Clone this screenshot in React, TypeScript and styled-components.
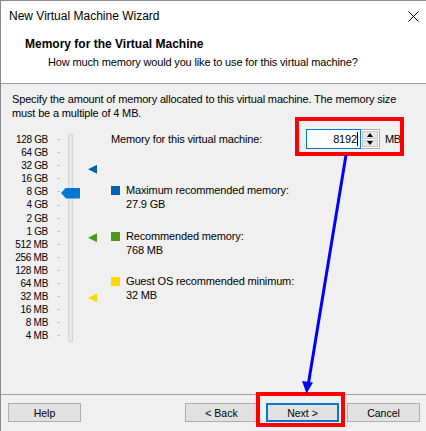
import React from 'react';
import styled, { createGlobalStyle } from 'styled-components';

const Global = createGlobalStyle`
  html, body { margin: 0; padding: 0; background: #f0f0f0; }
  body {
    font-family: "Liberation Sans", Arial, sans-serif;
    font-size: 12px;
    color: #000;
  }
  * { box-sizing: border-box; }
`;

const FONT = `"Liberation Sans", Arial, sans-serif`;

const Window = styled.div`
  position: relative;
  width: 426px;
  height: 431px;
  border-left: 1px solid #8a8a8a;
  border-top: 1px solid #8a8a8a;
  background: #f0f0f0;
  display: flex;
  flex-direction: column;
  overflow: hidden;
  font-family: ${FONT};
  font-size: 11px;
  letter-spacing: -0.15px;
`;

const TitleBar = styled.div`
  height: 30px;
  background: #fff;
  display: flex;
  align-items: center;
  justify-content: space-between;
  padding: 0 7px 0 8px;
  font-size: 12px;
  letter-spacing: 0;
`;

const Header = styled.div`
  height: 53px;
  background: #fff;
  border-bottom: 1px solid #a0a0a0;
  padding: 5px 0 0 24px;
  display: flex;
  flex-direction: column;
`;

const HeaderTitle = styled.div`
  font-weight: bold;
  font-size: 12px;
  letter-spacing: 0;
  line-height: 17px;
`;

const HeaderSub = styled.div`
  line-height: 17px;
  padding-left: 23px;
  margin-top: 1px;
`;

const Body = styled.div`
  flex: 1;
  display: flex;
  flex-direction: column;
  padding: 8px 0 0 11px;
`;

const Description = styled.div`
  line-height: 14px;
  width: 400px;
`;

const Content = styled.div`
  display: flex;
  margin-top: 9px;
`;

const SliderArea = styled.div`
  display: flex;
  align-items: flex-start;
`;

const STEP = 13.1;

const Labels = styled.div`
  width: 36px;
  padding-top: 4px;
  display: flex;
  flex-direction: column;
  align-items: flex-end;
  font-size: 10px;
  letter-spacing: -0.3px;
`;

const ScaleLabel = styled.div`
  height: ${STEP}px;
  line-height: ${STEP}px;
  white-space: nowrap;
`;

const Ticks = styled.div`
  width: 3px;
  margin-left: 9px;
  padding-top: 4px;
  display: flex;
  flex-direction: column;
`;

const Tick = styled.div`
  height: ${STEP}px;
  display: flex;
  align-items: center;
  &::before {
    content: '';
    display: block;
    width: 3px;
    height: 1px;
    background: #c4c4c4;
  }
`;

const Track = styled.div`
  position: relative;
  width: 5px;
  height: 208px;
  margin-left: 8px;
  margin-top: 5px;
  border: 1px solid #d6d6d6;
  background: #e7e7e7;
`;

const Thumb = styled.div`
  position: absolute;
  left: -8px;
  width: 19px;
  height: 11px;
  background: #0078d7;
  clip-path: polygon(0 50%, 5px 0, 100% 0, 100% 100%, 5px 100%);
`;

const Marker = styled.div<{ $color: string }>`
  position: absolute;
  left: 19px;
  width: 9px;
  height: 9px;
  background: ${(p) => p.$color};
  clip-path: polygon(0 50%, 100% 0, 100% 100%);
`;

const RightPane = styled.div`
  margin-left: 38px;
  display: flex;
  flex-direction: column;
`;

const MemRow = styled.div`
  display: flex;
  align-items: center;
  height: 20px;
`;

const MemLabel = styled.div`
  width: 195px;
`;

const Input = styled.div`
  width: 55px;
  height: 20px;
  background: #fff;
  border: 1px solid #0078d7;
  display: flex;
  align-items: center;
  justify-content: flex-end;
  padding-right: 2px;
`;

const Caret = styled.span`
  display: inline-block;
  width: 1px;
  height: 14px;
  background: #000;
`;

const Spinner = styled.div`
  width: 19px;
  height: 20px;
  border: 1px solid #adadad;
  border-left: none;
  background: #fff;
  display: flex;
  flex-direction: column;
  gap: 1px;
  padding: 1px;
`;

const SpinBtn = styled.div`
  flex: 1;
  background: #e5e5e5;
  border: 1px solid #c8c8c8;
  display: flex;
  align-items: center;
  justify-content: center;
`;

const Arrow = styled.div<{ $up?: boolean }>`
  width: 0;
  height: 0;
  border-left: 3.5px solid transparent;
  border-right: 3.5px solid transparent;
  ${(p) => (p.$up ? 'border-bottom: 4px solid #000;' : 'border-top: 4px solid #000;')}
`;

const Unit = styled.div`
  margin-left: 5px;
  letter-spacing: -0.5px;
`;

const Legend = styled.div`
  margin-top: 34px;
  display: flex;
  flex-direction: column;
  gap: 17.5px;
`;

const LegendItem = styled.div`
  display: flex;
  align-items: flex-start;
`;

const Swatch = styled.div<{ $color: string }>`
  width: 9px;
  height: 9px;
  margin-top: 3px;
  margin-right: 6px;
  background: ${(p) => p.$color};
`;

const LegendText = styled.div`
  line-height: 14px;
`;

const Footer = styled.div`
  height: 37px;
  border-top: 1px solid #a0a0a0;
  display: flex;
  align-items: flex-start;
  padding: 8px 6px 0 7px;
  gap: 8px;
`;

const Button = styled.div<{ $default?: boolean }>`
  width: 73px;
  height: 19px;
  background: #e1e1e1;
  border: ${(p) => (p.$default ? '2px solid #0078d7' : '1px solid #adadad')};
  display: flex;
  align-items: center;
  justify-content: center;
  font-size: 10.5px;
  letter-spacing: 0;
`;

const Spacer = styled.div`
  flex: 1;
`;

const Overlay = styled.svg`
  position: absolute;
  left: -1px;
  top: -1px;
  pointer-events: none;
`;

const labels = [
  '128 GB', '64 GB', '32 GB', '16 GB', '8 GB', '4 GB', '2 GB', '1 GB',
  '512 MB', '256 MB', '128 MB', '64 MB', '32 MB', '16 MB', '8 MB', '4 MB',
];

// position of a memory size (MB) on the log scale, relative to track top
const FIRST = 5.7;
const pos = (mb: number) => FIRST + STEP * (17 - Math.log2(mb));

const markers = [
  { mb: 28970, color: '#0063b1' },
  { mb: 768, color: '#4f961a' },
  { mb: 32, color: '#ffd800' },
];

const legend = [
  { color: '#0063b1', title: 'Maximum recommended memory:', value: '27.9 GB' },
  { color: '#4f961a', title: 'Recommended memory:', value: '768 MB' },
  { color: '#ffd800', title: 'Guest OS recommended minimum:', value: '32 MB' },
];

export default function App() {
  return (
    <>
      <Global />
      <Window>
        <TitleBar>
          <span>New Virtual Machine Wizard</span>
          <svg width="11" height="11" viewBox="0 0 11 11">
            <path d="M0.5 0.5 L10.5 10.5 M10.5 0.5 L0.5 10.5" stroke="#000" strokeWidth="1" />
          </svg>
        </TitleBar>
        <Header>
          <HeaderTitle>Memory for the Virtual Machine</HeaderTitle>
          <HeaderSub>How much memory would you like to use for this virtual machine?</HeaderSub>
        </Header>
        <Body>
          <Description>
            Specify the amount of memory allocated to this virtual machine. The memory size
            must be a multiple of 4 MB.
          </Description>
          <Content>
            <SliderArea>
              <Labels>
                {labels.map((l) => (
                  <ScaleLabel key={l}>{l}</ScaleLabel>
                ))}
              </Labels>
              <Ticks>
                {labels.map((l) => (
                  <Tick key={l} />
                ))}
              </Ticks>
              <Track>
                <Thumb style={{ top: pos(8192) - 5.5 }} />
                {markers.map((m) => (
                  <Marker key={m.mb} $color={m.color} style={{ top: pos(m.mb) - 4.5 }} />
                ))}
              </Track>
            </SliderArea>
            <RightPane>
              <MemRow>
                <MemLabel>Memory for this virtual machine:</MemLabel>
                <Input>
                  8192
                  <Caret />
                </Input>
                <Spinner>
                  <SpinBtn>
                    <Arrow $up />
                  </SpinBtn>
                  <SpinBtn>
                    <Arrow />
                  </SpinBtn>
                </Spinner>
                <Unit>MB</Unit>
              </MemRow>
              <Legend>
                {legend.map((it) => (
                  <LegendItem key={it.title}>
                    <Swatch $color={it.color} />
                    <LegendText>
                      {it.title}
                      <br />
                      {it.value}
                    </LegendText>
                  </LegendItem>
                ))}
              </Legend>
            </RightPane>
          </Content>
        </Body>
        <Footer>
          <Button>Help</Button>
          <Spacer />
          <Button>&lt; Back</Button>
          <Button $default>Next &gt;</Button>
          <Button>Cancel</Button>
        </Footer>
        <Overlay width="426" height="431" viewBox="0 0 426 431">
          <rect x="297" y="119" width="105" height="35" fill="none" stroke="#ff0000" strokeWidth="4" />
          <rect x="258" y="394" width="85" height="31" fill="none" stroke="#ff0000" strokeWidth="4" />
          <line x1="346" y1="155" x2="308.5" y2="383" stroke="#0000ff" strokeWidth="3" />
          <polygon points="306.5,393.5 302,381 313,382.5" fill="#0000ff" />
        </Overlay>
      </Window>
    </>
  );
}
